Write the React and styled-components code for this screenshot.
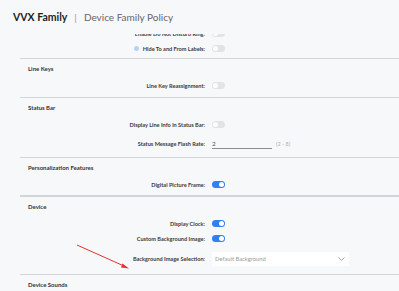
import React from 'react';
import styled, { createGlobalStyle } from 'styled-components';

const GlobalStyle = createGlobalStyle`
  html, body {
    margin: 0;
    padding: 0;
    background-color: #f7f8fa;
    font-family: Lato, "Open Sans", sans-serif;
  }
`;

const Page = styled.div`
  position: relative;
  width: 399px;
  height: 291px;
  overflow: hidden;
  background-color: #f7f8fa;
`;

const Header = styled.header`
  height: 34px;
  display: flex;
  align-items: center;
  padding-left: 13px;
  font-size: 10px;
  color: #666666;
`;

const Brand = styled.span`
  font-weight: 700;
  color: #1f1f1f;
  font-size: 10.5px;
`;

const Pipe = styled.span`
  margin: 0 7px;
  color: #999999;
`;

const Content = styled.div`
  height: 257px;
  overflow: hidden;
`;

// list is scrolled a little, the first row is cut at the top
const List = styled.div`
  margin-top: -8px;
`;

const Section = styled.section`
  margin-left: 20px;
  padding-bottom: ${({ $pb }) => ($pb ?? 3)}px;
  border-top: ${({ $line }) => ($line === 0 ? 'none' : `${$line || 1}px solid #d3d5d8`)};
`;

const Title = styled.div`
  margin: 5px 0 4px 8px;
  height: 10px;
  line-height: 10px;
  font-size: 6px;
  font-weight: 700;
  color: #333333;
`;

const Row = styled.div`
  display: grid;
  grid-template-columns: 185px 1fr;
  column-gap: 7px;
  align-items: center;
  height: ${({ $h }) => $h || 15}px;
`;

const Label = styled.div`
  display: flex;
  justify-content: flex-end;
  align-items: center;
  gap: 4px;
  font-size: 5.6px;
  font-weight: 700;
  color: #3a3a3a;
  white-space: nowrap;
`;

const Dot = styled.span`
  width: 5px;
  height: 5px;
  border-radius: 50%;
  background-color: #b8d3f2;
`;

const Toggle = styled.span`
  position: relative;
  display: block;
  width: 13px;
  height: 7px;
  border-radius: 4px;
  background-color: ${({ $on }) => ($on ? '#2f80f3' : '#e2e3e5')};

  &::after {
    content: '';
    position: absolute;
    top: 1px;
    left: ${({ $on }) => ($on ? '7px' : '1px')};
    width: 5px;
    height: 5px;
    border-radius: 50%;
    background-color: #ffffff;
  }
`;

const Control = styled.div`
  display: flex;
  align-items: center;
  gap: 4px;
`;

const Input = styled.div`
  width: 60px;
  height: 9px;
  border-bottom: 1px solid #8e8e8e;
  font-size: 6.5px;
  line-height: 9px;
  color: #555555;
`;

const Hint = styled.span`
  font-size: 5.5px;
  color: #b0b0b0;
`;

const Select = styled.div`
  width: 137px;
  height: 14px;
  box-sizing: border-box;
  padding: 0 4px 0 3px;
  display: flex;
  align-items: center;
  justify-content: space-between;
  background-color: #ffffff;
  font-size: 5.8px;
  color: #9a9a9a;
`;

const Arrow = styled.svg`
  position: absolute;
  left: 0;
  top: 0;
  pointer-events: none;
`;

function ToggleRow({ label, on, dot }) {
  return (
    <Row>
      <Label>
        {dot && <Dot />}
        {label}
      </Label>
      <Control>
        <Toggle $on={on} />
      </Control>
    </Row>
  );
}

export default function App() {
  return (
    <Page>
      <GlobalStyle />
      <Header>
        <Brand>VVX Family</Brand>
        <Pipe>|</Pipe>
        <span>Device Family Policy</span>
      </Header>
      <Content>
        <List>
          <Section $line={0} $pb={2}>
            <ToggleRow label="Enable Do Not Disturb Ring:" />
            <ToggleRow label="Hide To and From Labels:" dot />
          </Section>
          <Section $pb={4}>
            <Title>Line Keys</Title>
            <ToggleRow label="Line Key Reassignment:" />
          </Section>
          <Section $pb={2}>
            <Title>Status Bar</Title>
            <ToggleRow label="Display Line Info in Status Bar:" />
            <Row $h={23}>
              <Label>Status Message Flash Rate:</Label>
              <Control>
                <Input>2</Input>
                <Hint>(2 - 8)</Hint>
              </Control>
            </Row>
          </Section>
          <Section>
            <Title>Personalization Features</Title>
            <ToggleRow label="Digital Picture Frame:" on />
          </Section>
          <Section $line={2}>
            <Title>Device</Title>
            <ToggleRow label="Display Clock:" on />
            <ToggleRow label="Custom Background Image:" on />
            <Row $h={25}>
              <Label>Background Image Selection:</Label>
              <Control>
                <Select>
                  Default Background
                  <svg width="7" height="4" viewBox="0 0 7 4">
                    <path d="M0.5 0.5 L3.5 3.3 L6.5 0.5" fill="none" stroke="#8a8a8a" strokeWidth="0.8" />
                  </svg>
                </Select>
              </Control>
            </Row>
          </Section>
          <Section>
            <Title>Device Sounds</Title>
          </Section>
        </List>
      </Content>
      <Arrow width="399" height="291" viewBox="0 0 399 291">
        <line x1="77" y1="245" x2="124" y2="266" stroke="#e5322d" strokeWidth="1" />
        <path d="M129 268.5 L122.5 263.5 L121 267.5 Z" fill="#e5322d" />
      </Arrow>
    </Page>
  );
}
